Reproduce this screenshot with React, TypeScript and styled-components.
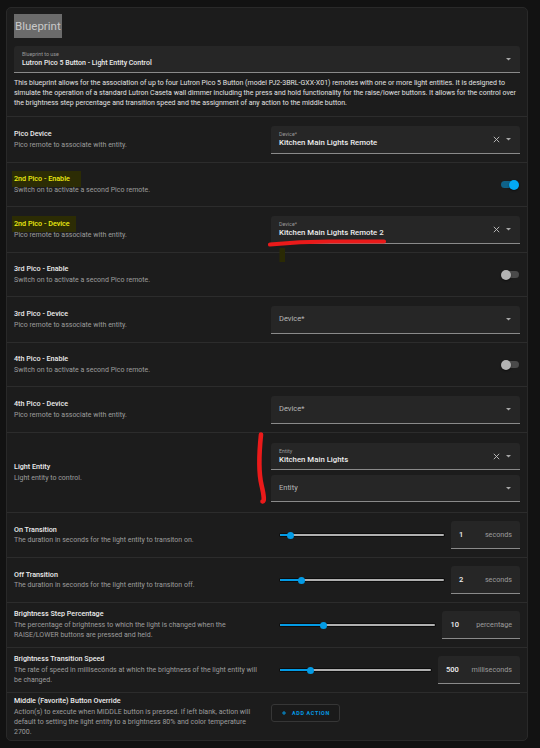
import React from "react";
import styled, { createGlobalStyle, css } from "styled-components";

const GlobalStyle = createGlobalStyle`
  html, body { margin: 0; padding: 0; background: #121212; }
  body { font-family: Roboto, "Noto Sans", "Liberation Sans", sans-serif; -webkit-font-smoothing: antialiased; }
  * { box-sizing: border-box; }
`;

const Page = styled.div`
  position: relative;
  width: 540px;
  height: 748px;
  padding: 7px 12px 0 6px;
  overflow: hidden;
`;

const Card = styled.div`
  width: 522px;
  background: #1c1c1c;
  border: 1px solid #292929;
  border-radius: 5px;
  overflow: hidden;
`;

const Header = styled.div`
  display: flex;
  flex-direction: column;
  padding: 6px 7px 8px;
`;

const Title = styled.h1`
  margin: 0 0 8px;
  width: fit-content;
  height: 24px;
  line-height: 24px;
  padding: 0 1px;
  font-size: 11.5px;
  font-weight: 400;
  color: #c9c9c9;
  background: #6b6b6b;
`;

const Intro = styled.p`
  margin: 5px 0 0;
  font-size: 7px;
  line-height: 10px;
  color: #e2e2e2;
`;

const Field = styled.div<{ $h?: number }>`
  display: flex;
  align-items: center;
  gap: 6px;
  height: ${(p) => p.$h ?? 28}px;
  padding: 0 9px 0 8px;
  background: #262626;
  border-bottom: 1px solid #8a8a8a;
  border-radius: 3px 3px 0 0;
`;

const FieldText = styled.div`
  flex: 1;
  display: flex;
  flex-direction: column;
`;

const FloatLabel = styled.div`
  font-size: 5.3px;
  line-height: 7px;
  color: #9a9a9a;
`;

const Value = styled.div<{ $small?: boolean }>`
  font-size: ${(p) => (p.$small ? "7px" : "7.8px")};
  line-height: 10px;
  font-weight: 500;
  color: #ececec;
  white-space: nowrap;
`;

const Placeholder = styled.div`
  font-size: 7.5px;
  line-height: 10px;
  color: #b8b8b8;
`;

const Row = styled.div<{ $h: number; $top?: boolean }>`
  display: flex;
  align-items: ${(p) => (p.$top ? "flex-start" : "center")};
  justify-content: space-between;
  height: ${(p) => p.$h}px;
  padding: ${(p) => (p.$top ? "3px 7px 0" : "0 7px")};
  border-top: 1px solid #2c2c2c;
`;

const Info = styled.div<{ $w?: number }>`
  width: ${(p) => p.$w ?? 246}px;
  flex: none;
`;

const Label = styled.div`
  font-size: 7.2px;
  line-height: 10.5px;
  font-weight: 500;
  color: #ececec;
`;

const Marked = styled.span<{ $pr: number }>`
  display: inline-block;
  line-height: 10px;
  padding: 3px ${(p) => p.$pr}px 3px 2px;
  margin: -3px 0 -3px -2px;
  background: #2c2c04;
  color: #eeee12;
`;

const Desc = styled.div`
  font-size: 7px;
  line-height: 10.4px;
  color: #9c9c9c;
`;

const Control = styled.div<{ $center?: boolean }>`
  width: 249px;
  flex: none;
  display: flex;
  flex-direction: ${(p) => (p.$center ? "row" : "column")};
  align-items: ${(p) => (p.$center ? "center" : "stretch")};
  gap: 5px;
`;

const SwitchBox = styled.div`
  position: relative;
  width: 18px;
  height: 10px;
  margin-right: 1px;
`;

const SwitchTrack = styled.div<{ $on: boolean }>`
  position: absolute;
  top: 1.5px;
  width: 16px;
  height: 7px;
  border-radius: 4px;
  ${(p) =>
    p.$on
      ? css`
          left: 0;
          background: #0f6288;
        `
      : css`
          right: 0;
          background: #4a4a4a;
        `}
`;

const SwitchThumb = styled.div<{ $on: boolean }>`
  position: absolute;
  top: 0;
  width: 10px;
  height: 10px;
  border-radius: 50%;
  box-shadow: 0 1px 2px rgba(0, 0, 0, 0.5);
  ${(p) =>
    p.$on
      ? css`
          right: 0;
          background: #03a9f4;
        `
      : css`
          left: 0;
          background: #b3b3b3;
        `}
`;

const SliderWrap = styled.div`
  flex: 1;
  display: flex;
  align-items: center;
  height: 10px;
  margin: 0 2px 0 8.5px;
`;

const Track = styled.div`
  position: relative;
  width: 100%;
  height: 2px;
  background: #b0b0b0;
  border-radius: 1px;
  box-shadow: 0 0 0 1px #0c0c0c;
`;

const TrackFill = styled.div`
  position: absolute;
  left: 0;
  top: 0;
  bottom: 0;
  background: #039be5;
  border-radius: 1px;
`;

const Knob = styled.div`
  position: absolute;
  top: 50%;
  width: 7px;
  height: 7px;
  margin: -3.5px 0 0 -3.5px;
  border-radius: 50%;
  background: #039be5;
`;

const NumberBox = styled.div<{ $w: number }>`
  width: ${(p) => p.$w}px;
  flex: none;
  height: 28px;
  display: flex;
  align-items: center;
  justify-content: space-between;
  padding: 0 8px 0 8.5px;
  background: #262626;
  border-bottom: 1px solid #8a8a8a;
  border-radius: 3px 3px 0 0;
`;

const Num = styled.span`
  font-size: 7.5px;
  font-weight: 500;
  color: #f2f2f2;
`;

const Suffix = styled.span`
  font-size: 7.2px;
  color: #9c9c9c;
`;

const AddButton = styled.button`
  display: inline-flex;
  align-items: center;
  gap: 6px;
  width: 69px;
  height: 18px;
  margin-top: 8px;
  padding: 0 0 0 10px;
  background: #1a1a1a;
  border: 1px solid #363636;
  border-radius: 3px;
  color: #039be5;
  font-family: Roboto, "Liberation Sans", sans-serif;
  font-size: 5.4px;
  font-weight: 700;
  letter-spacing: 0.65px;
`;

const Overlay = styled.svg`
  position: absolute;
  left: 0;
  top: 0;
  pointer-events: none;
`;

const Clear = () => (
  <svg width="7" height="7" viewBox="0 0 7 7">
    <path d="M0.8 0.8 L6.2 6.2 M6.2 0.8 L0.8 6.2" stroke="#c4c4c4" strokeWidth="0.9" />
  </svg>
);

const Caret = () => (
  <svg width="5" height="3" viewBox="0 0 5 3">
    <path d="M0 0 H5 L2.5 2.6 Z" fill="#a8a8a8" />
  </svg>
);

const Select = ({
  label,
  value,
  placeholder,
  clear,
  small,
  h,
}: {
  label?: string;
  value?: string;
  placeholder?: string;
  clear?: boolean;
  small?: boolean;
  h?: number;
}) => (
  <Field $h={h}>
    <FieldText>
      {value ? (
        <>
          <FloatLabel>{label}</FloatLabel>
          <Value $small={small}>{value}</Value>
        </>
      ) : (
        <Placeholder>{placeholder}</Placeholder>
      )}
    </FieldText>
    {clear && <Clear />}
    <Caret />
  </Field>
);

const Toggle = ({ on }: { on: boolean }) => (
  <SwitchBox>
    <SwitchTrack $on={on} />
    <SwitchThumb $on={on} />
  </SwitchBox>
);

const Slider = ({ frac }: { frac: number }) => (
  <SliderWrap>
    <Track>
      <TrackFill style={{ width: `${frac * 100}%` }} />
      <Knob style={{ left: `${frac * 100}%` }} />
    </Track>
  </SliderWrap>
);

const NumberSetting = ({ frac, value, unit, w }: { frac: number; value: string; unit: string; w: number }) => (
  <Control $center>
    <Slider frac={frac} />
    <NumberBox $w={w}>
      <Num>{value}</Num>
      <Suffix>{unit}</Suffix>
    </NumberBox>
  </Control>
);

const Text = ({ label, desc, w }: { label: React.ReactNode; desc: string; w?: number }) => (
  <Info $w={w}>
    <Label>{label}</Label>
    <Desc>{desc}</Desc>
  </Info>
);

export default function App() {
  return (
    <>
      <GlobalStyle />
      <Page>
        <Card>
          <Header>
            <Title>Blueprint</Title>
            <Select label="Blueprint to use" value="Lutron Pico 5 Button - Light Entity Control" small h={27} />
            <Intro>
              This blueprint allows for the association of up to four Lutron Pico 5 Button (model PJ2-3BRL-GXX-X01)
              remotes with one or more light entities. It is designed to simulate the operation of a standard Lutron
              Caseta wall dimmer including the press and hold functionality for the raise/lower buttons. It allows for
              the control over the brightness step percentage and transition speed and the assignment of any action to
              the middle button.
            </Intro>
          </Header>

          <Row $h={46}>
            <Text label="Pico Device" desc="Pico remote to associate with entity." />
            <Control>
              <Select label="Device*" value="Kitchen Main Lights Remote" clear />
            </Control>
          </Row>

          <Row $h={44}>
            <Text label={<Marked $pr={11}>2nd Pico - Enable</Marked>} desc="Switch on to activate a second Pico remote." />
            <Toggle on />
          </Row>

          <Row $h={46}>
            <Text label={<Marked $pr={6}>2nd Pico - Device</Marked>} desc="Pico remote to associate with entity." />
            <Control>
              <Select label="Device*" value="Kitchen Main Lights Remote 2" clear />
            </Control>
          </Row>

          <Row $h={44}>
            <Text label="3rd Pico - Enable" desc="Switch on to activate a second Pico remote." />
            <Toggle on={false} />
          </Row>

          <Row $h={46}>
            <Text label="3rd Pico - Device" desc="Pico remote to associate with entity." />
            <Control>
              <Select placeholder="Device*" />
            </Control>
          </Row>

          <Row $h={44}>
            <Text label="4th Pico - Enable" desc="Switch on to activate a second Pico remote." />
            <Toggle on={false} />
          </Row>

          <Row $h={46}>
            <Text label="4th Pico - Device" desc="Pico remote to associate with entity." />
            <Control>
              <Select placeholder="Device*" />
            </Control>
          </Row>

          <Row $h={80}>
            <Text label="Light Entity" desc="Light entity to control." />
            <Control>
              <Select label="Entity" value="Kitchen Main Lights" clear h={27} />
              <Select placeholder="Entity" h={27} />
            </Control>
          </Row>

          <Row $h={45}>
            <Text label="On Transition" desc="The duration in seconds for the light entity to transiton on." />
            <NumberSetting frac={0.065} value="1" unit="seconds" w={69.5} />
          </Row>

          <Row $h={45}>
            <Text label="Off Transition" desc="The duration in seconds for the light entity to transiton off." />
            <NumberSetting frac={0.132} value="2" unit="seconds" w={69.5} />
          </Row>

          <Row $h={45}>
            <Text
              label="Brightness Step Percentage"
              desc="The percentage of brightness to which the light is changed when the RAISE/LOWER buttons are pressed and held."
            />
            <NumberSetting frac={0.28} value="10" unit="percentage" w={78} />
          </Row>

          <Row $h={45}>
            <Text
              label="Brightness Transition Speed"
              desc="The rate of speed in milliseconds at which the brightness of the light entity will be changed."
            />
            <NumberSetting frac={0.207} value="500" unit="milliseconds" w={82.5} />
          </Row>

          <Row $h={48} $top>
            <Text
              w={240}
              label="Middle (Favorite) Button Override"
              desc="Action(s) to execute when MIDDLE button is pressed. If left blank, action will default to setting the light entity to a brightness 80% and color temperature 2700."
            />
            <Control>
              <AddButton>
                <svg width="4" height="4" viewBox="0 0 4 4">
                  <path d="M2 0 V4 M0 2 H4" stroke="#039be5" strokeWidth="0.9" />
                </svg>
                ADD ACTION
              </AddButton>
            </Control>
          </Row>
        </Card>

        <Overlay width="540" height="748" viewBox="0 0 540 748">
          <rect x="279.5" y="248" width="5.5" height="14" fill="#2a2a04" />
          <path
            d="M270 244.5 Q 300 241.5 330 241.5 T 384 241.5"
            stroke="#ea1a1a"
            strokeWidth="4.2"
            strokeLinecap="round"
            fill="none"
          />
          <path
            d="M261 434.5 Q 257.5 468 261.5 485 T 262.5 501.5"
            stroke="#ea1a1a"
            strokeWidth="4.6"
            strokeLinecap="round"
            fill="none"
          />
        </Overlay>
      </Page>
    </>
  );
}
